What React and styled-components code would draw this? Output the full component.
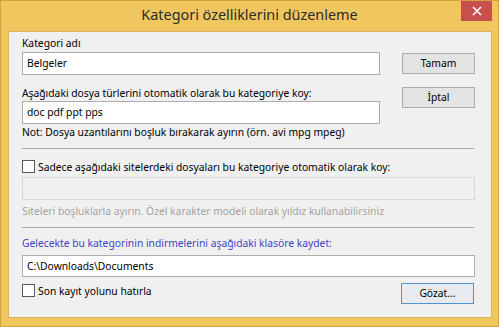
import styled, { createGlobalStyle } from "styled-components";

const GlobalStyle = createGlobalStyle`
  html, body {
    margin: 0;
    padding: 0;
    width: 499px;
    height: 327px;
    overflow: hidden;
  }
  body {
    font-family: "Noto Sans", "Liberation Sans", sans-serif;
    font-size: 10.3px;
    color: #000;
  }
`;

const Frame = styled.div`
  box-sizing: border-box;
  width: 499px;
  height: 327px;
  background: #f0c75f;
  border: 1px solid #d2a140;
  display: flex;
  flex-direction: column;
`;

const TitleBar = styled.div`
  height: 30px;
  display: grid;
  grid-template-columns: 1fr auto 1fr;
  align-items: start;
`;

const Title = styled.div`
  grid-column: 2;
  font-size: 14.4px;
  line-height: 20px;
  padding-top: 4px;
  color: #2b2b2b;
  white-space: nowrap;
`;

const CloseButton = styled.div`
  grid-column: 3;
  justify-self: end;
  margin-right: 6px;
  width: 31px;
  height: 20px;
  background: #c7504d;
  display: flex;
  align-items: center;
  justify-content: center;
`;

const Client = styled.div`
  flex: 1;
  margin: 0 6px 8px 7px;
  background: #f0f0f0;
  border: 1px solid #d9b35f;
  padding: 4px 16px 0 13px;
  display: flex;
  flex-direction: column;
`;

const TopGrid = styled.div`
  display: grid;
  grid-template-columns: 358px 1fr 73px;
`;

const FieldColumn = styled.div`
  grid-column: 1;
  display: flex;
  flex-direction: column;
`;

const ButtonColumn = styled.div`
  grid-column: 3;
  display: flex;
  flex-direction: column;
  gap: 13px;
  padding-top: 17px;
`;

const Label = styled.div`
  line-height: 15px;
  white-space: nowrap;
  color: ${(p) => (p.$tone === "blue" ? "#4343c6" : p.$tone === "muted" ? "#a3a3a3" : "#000")};
  margin-top: ${(p) => p.$top || 0}px;
`;

const TextBox = styled.div`
  box-sizing: border-box;
  height: ${(p) => p.$h || 23}px;
  margin-top: ${(p) => p.$top || 0}px;
  background: ${(p) => (p.$disabled ? "#f0f0f0" : "#fff")};
  border: 1px solid ${(p) => (p.$disabled ? "#d5d5d5" : "#abadb3")};
  padding: 0 4px;
  display: flex;
  align-items: center;
  line-height: 15px;
  white-space: nowrap;
`;

const Button = styled.div`
  box-sizing: border-box;
  width: 73px;
  height: 21px;
  background: ${(p) => (p.$default ? "#e7eaee" : "#e3e3e3")};
  border: 1px solid ${(p) => (p.$default ? "#4f93cf" : "#acacac")};
  display: flex;
  align-items: center;
  justify-content: center;
  line-height: 15px;
  margin-right: ${(p) => p.$inset || 0}px;
`;

const Separator = styled.div`
  height: 1px;
  background: #a9a9a9;
  margin: ${(p) => p.$top}px 1px 0 0;
`;

const CheckRow = styled.label`
  display: flex;
  align-items: center;
  gap: 3px;
  height: 15px;
  margin-top: ${(p) => p.$top || 0}px;
  white-space: nowrap;
`;

const Box = styled.span`
  box-sizing: border-box;
  width: 13px;
  height: 13px;
  border: 1px solid #5a5a5a;
  background: #fff;
  flex: none;
`;

const BottomRow = styled.div`
  display: flex;
  justify-content: space-between;
  align-items: flex-start;
  margin-top: 6px;
`;

const Check = ({ children, top }) => (
  <CheckRow $top={top}>
    <Box />
    {children}
  </CheckRow>
);

export default function App() {
  return (
    <>
      <GlobalStyle />
      <Frame>
        <TitleBar>
          <Title>Kategori özelliklerini düzenleme</Title>
          <CloseButton>
            <svg width="10" height="10" viewBox="0 0 10 10">
              <path d="M1 1 L9 9 M9 1 L1 9" stroke="#fff" strokeWidth="1.6" />
            </svg>
          </CloseButton>
        </TitleBar>
        <Client>
          <TopGrid>
            <FieldColumn>
              <Label>Kategori adı</Label>
              <TextBox $top={1}>Belgeler</TextBox>
              <Label $top={11}>Aşağıdaki dosya türlerini otomatik olarak bu kategoriye koy:</Label>
              <TextBox>doc pdf ppt pps</TextBox>
              <Label $top={1}>Not: Dosya uzantılarını boşluk bırakarak ayırın (örn. avi mpg mpeg)</Label>
            </FieldColumn>
            <ButtonColumn>
              <Button $inset={1}>Tamam</Button>
              <Button $inset={1}>İptal</Button>
            </ButtonColumn>
          </TopGrid>
          <Separator $top={8} />
          <Check top={10}>Sadece aşağıdaki sitelerdeki dosyaları bu kategoriye otomatik olarak koy:</Check>
          <TextBox $disabled $top={3} />
          <Label $tone="muted" $top={4}>
            Siteleri boşluklarla ayırın. Özel karakter modeli olarak yıldız kullanabilirsiniz
          </Label>
          <Separator $top={8} />
          <Label $tone="blue" $top={8}>Gelecekte bu kategorinin indirmelerini aşağıdaki klasöre kaydet:</Label>
          <TextBox $h={22} $top={4}>C:\Downloads\Documents</TextBox>
          <BottomRow>
            <Check>Son kayıt yolunu hatırla</Check>
            <Button $default $inset={1}>Gözat...</Button>
          </BottomRow>
        </Client>
      </Frame>
    </>
  );
}
